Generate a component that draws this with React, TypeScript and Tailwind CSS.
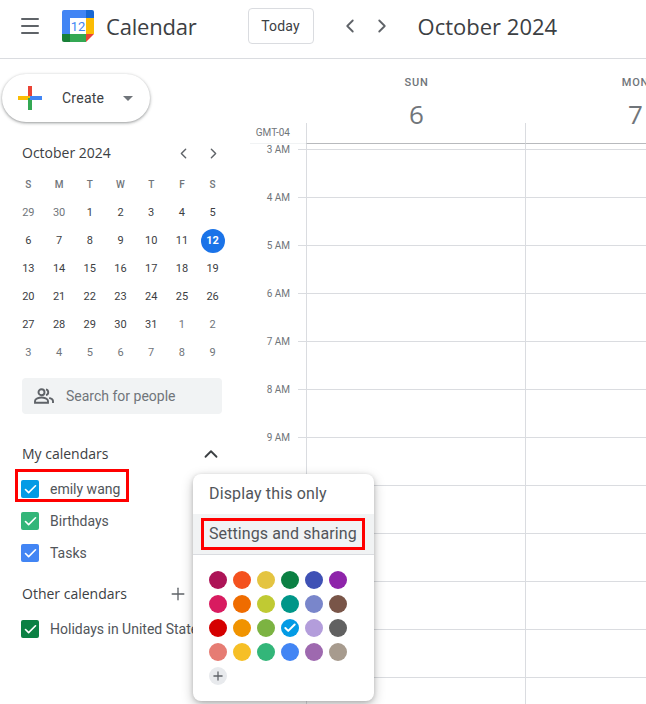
import { ChevronLeft, ChevronRight, ChevronUp, Menu, Plus, Check } from 'lucide-react';

const weekDays = ['S', 'M', 'T', 'W', 'T', 'F', 'S'];

const miniDays = [
  ['29', '30', '1', '2', '3', '4', '5'],
  ['6', '7', '8', '9', '10', '11', '12'],
  ['13', '14', '15', '16', '17', '18', '19'],
  ['20', '21', '22', '23', '24', '25', '26'],
  ['27', '28', '29', '30', '31', '1', '2'],
  ['3', '4', '5', '6', '7', '8', '9'],
];

const hours = ['3 AM', '4 AM', '5 AM', '6 AM', '7 AM', '8 AM', '9 AM', '', '', '', '', ''];

const swatches = [
  '#AD1457', '#F4511E', '#E4C441', '#0B8043', '#3F51B5', '#8E24AA',
  '#D81B60', '#EF6C00', '#C0CA33', '#009688', '#7986CB', '#795548',
  '#D50000', '#F09300', '#7CB342', '#039BE5', '#B39DDB', '#616161',
  '#E67C73', '#F6BF26', '#33B679', '#4285F4', '#9E69AF', '#A79B8E',
];

function Logo() {
  return (
    <svg width="32" height="32" viewBox="0 0 32 32" className="shrink-0">
      <path d="M2 0h22v8H8v16H0V2a2 2 0 0 1 2-2z" fill="#4285f4" />
      <path d="M24 0h6a2 2 0 0 1 2 2v6h-8z" fill="#1967d2" />
      <rect x="24" y="8" width="8" height="16" fill="#fbbc04" />
      <rect x="8" y="24" width="16" height="8" fill="#34a853" />
      <path d="M0 24h8v8H2a2 2 0 0 1-2-2z" fill="#188038" />
      <path d="M24 24h8l-8 8z" fill="#ea4335" />
      <text x="16" y="21" textAnchor="middle" fontSize="13" fill="#4285f4" fontFamily="Roboto, sans-serif">12</text>
    </svg>
  );
}

function ColorPlus() {
  return (
    <svg width="24" height="24" viewBox="0 0 24 24" className="shrink-0">
      <rect x="10" y="0" width="4" height="12" fill="#ea4335" />
      <rect x="0" y="10" width="12" height="4" fill="#fbbc04" />
      <rect x="10" y="12" width="4" height="12" fill="#34a853" />
      <rect x="12" y="10" width="12" height="4" fill="#4285f4" />
    </svg>
  );
}

function PeopleIcon() {
  return (
    <svg width="20" height="16" viewBox="0 0 20 16" fill="none" stroke="#5f6368" strokeWidth="1.9" className="shrink-0">
      <circle cx="7.5" cy="4.2" r="3" />
      <path d="M1 14.8v-1.9c0-2 4-3.4 6.5-3.4s6.5 1.4 6.5 3.4v1.9z" />
      <path d="M12 1.3a3 3 0 0 1 0 5.8" />
      <path d="M15.2 9.8c2 .5 3.8 1.5 3.8 3.1v2" />
    </svg>
  );
}

function CalRow({ color, label }: { color: string; label: string }) {
  return (
    <div className="flex items-center h-8 pl-[21px]">
      <span className="w-[18px] h-[18px] rounded-[2px] flex items-center justify-center shrink-0" style={{ backgroundColor: color }}>
        <Check size={15} strokeWidth={2.6} className="text-white" />
      </span>
      <span className="ml-[11px] text-sm text-[#51555a] whitespace-nowrap">{label}</span>
    </div>
  );
}

export default function App() {
  return (
    <div className="relative w-[646px] h-[704px] overflow-hidden bg-white font-['Roboto',sans-serif] flex flex-col">
      <header className="h-[59px] shrink-0 border-b border-[#dadce0] flex items-center pb-[6px]">
        <Menu size={24} strokeWidth={2} className="ml-[18px] text-[#5f6368]" />
        <div className="ml-[20px]">
          <Logo />
        </div>
        <span className="ml-3 text-[22px] tracking-[-0.2px] text-[#3c4043] font-['Open_Sans',sans-serif]">Calendar</span>
        <button className="ml-[51px] w-[66px] h-9 border border-[#dadce0] rounded text-sm text-[#3c4043] tracking-[0.2px]">Today</button>
        <ChevronLeft size={22} strokeWidth={2} className="ml-[25px] text-[#5f6368]" />
        <ChevronRight size={22} strokeWidth={2} className="ml-[10px] text-[#5f6368]" />
        <span className="ml-[25px] text-[22px] text-[#3c4043] font-['Open_Sans',sans-serif] whitespace-nowrap">October 2024</span>
      </header>

      <div className="flex flex-1 min-h-0">
        <aside className="w-[250px] shrink-0">
          <button className="mt-[15px] ml-[2px] w-[148px] h-12 rounded-full bg-white shadow-[0_1px_3px_1px_rgba(60,64,67,0.2),0_1px_2px_0_rgba(60,64,67,0.3)] flex items-center pl-4">
            <ColorPlus />
            <span className="ml-5 text-sm text-[#3c4043] tracking-[0.25px]">Create</span>
            <span className="ml-[19px] mt-[1px] w-0 h-0 border-x-[5px] border-x-transparent border-t-[5px] border-t-[#70757a]" />
          </button>

          <div className="mt-[19px] ml-[22px] w-[200px] flex items-center h-6">
            <span className="text-sm text-[#3c4043] font-['Open_Sans',sans-serif] flex-1">October 2024</span>
            <ChevronLeft size={17} className="text-[#5f6368] mr-[13px]" />
            <ChevronRight size={17} className="text-[#5f6368]" />
          </div>

          <div className="ml-[13px] mt-[6px] grid grid-cols-7 w-[215px] text-center text-[11px] leading-7">
            {weekDays.map((d, i) => (
              <span key={i} className="h-7 text-[10px] font-medium text-[#70757a]">{d}</span>
            ))}
            {miniDays.flat().map((d, i) => {
              const muted = i < 2 || i > 32;
              const today = i === 13;
              return (
                <span key={i} className="h-7 flex items-center justify-center">
                  <span className={`w-6 h-6 rounded-full flex items-center justify-center ${today ? 'bg-[#1a73e8] text-white font-bold' : muted ? 'text-[#70757a]' : 'text-[#3c4043]'}`}>{d}</span>
                </span>
              );
            })}
          </div>

          <div className="ml-[22px] mt-[11px] w-[200px] h-9 rounded bg-[#f1f3f4] flex items-center pl-[12px]">
            <PeopleIcon />
            <span className="ml-[12px] text-sm text-[#70757a]">Search for people</span>
          </div>

          <div className="mt-[24px] ml-[22px] w-[199px] flex items-center justify-between h-8">
            <span className="text-sm text-[#3c4043] font-['Open_Sans',sans-serif]">My calendars</span>
            <ChevronUp size={22} strokeWidth={2} className="text-[#3c4043] -mr-[1px]" />
          </div>
          <div className="mt-[3px]">
            <CalRow color="#039be5" label="emily wang" />
            <CalRow color="#33b679" label="Birthdays" />
            <CalRow color="#4285f4" label="Tasks" />
          </div>
          <div className="mt-[9px] ml-[22px] w-[166px] flex items-center justify-between h-8">
            <span className="text-sm text-[#3c4043] font-['Open_Sans',sans-serif]">Other calendars</span>
            <Plus size={20} strokeWidth={1.6} className="text-[#5f6368]" />
          </div>
          <div className="mt-[3px]">
            <CalRow color="#0b8043" label="Holidays in United States" />
          </div>
        </aside>

        <main className="flex-1 min-w-0 overflow-hidden">
          <div className="flex h-[64px]">
            <div className="w-[56px] shrink-0" />
            <div className="w-[219px] shrink-0 flex flex-col items-center pt-[18px] pl-[2px]">
              <span className="text-[11px] leading-3 font-medium tracking-[0.8px] text-[#70757a]">SUN</span>
              <span className="text-[26px] leading-8 mt-[9px] text-[#70757a] font-['Open_Sans',sans-serif]">6</span>
            </div>
            <div className="w-[219px] shrink-0 flex flex-col items-center pt-[18px] pl-[2px]">
              <span className="text-[11px] leading-3 font-medium tracking-[0.8px] text-[#70757a]">MON</span>
              <span className="text-[26px] leading-8 mt-[9px] text-[#70757a] font-['Open_Sans',sans-serif]">7</span>
            </div>
          </div>
          <div className="flex h-[21px]">
            <div className="w-[56px] shrink-0 border-b border-[#f1f3f4] text-[10px] leading-3 text-[#70757a] text-right pr-[16px] pt-[4px] whitespace-nowrap">GMT-04</div>
            <div className="w-[219px] shrink-0 border-l border-b border-l-[#dadce0] border-b-[#b8babd]" />
            <div className="w-[219px] shrink-0 border-l border-b border-l-[#dadce0] border-b-[#b8babd]" />
          </div>
          <div className="flex h-[5px]">
            <div className="w-[56px] shrink-0" />
            <div className="w-[219px] shrink-0 border-l border-[#dadce0]" />
            <div className="w-[219px] shrink-0 border-l border-[#dadce0]" />
          </div>
          {hours.map((h, i) => (
            <div key={i} className="flex h-[48px]">
              <div className="w-[48px] shrink-0 text-[10px] leading-3 text-[#70757a] text-right pr-[8px] -mt-[5px] whitespace-nowrap">{h}</div>
              <div className="w-[8px] shrink-0 border-t border-[#dadce0]" />
              <div className="w-[219px] shrink-0 border-l border-t border-[#dadce0]" />
              <div className="w-[219px] shrink-0 border-l border-t border-[#dadce0]" />
            </div>
          ))}
        </main>
      </div>

      <div className="absolute left-[15px] top-[469px] w-[114px] h-[33px] border-[3px] border-[#ff0000]" />

      <div className="absolute left-[193px] top-[474px] w-[181px] h-[227px] bg-white rounded-lg shadow-[0_4px_12px_rgba(0,0,0,0.25),0_1px_4px_rgba(0,0,0,0.15)] text-[#51555a]">
        <div className="h-[40px] pl-4 flex items-center text-base tracking-[0.15px]">Display this only</div>
        <div className="relative h-[41px] bg-[#f1f3f4] border-b border-[#dadce0] pl-4 flex items-center text-base tracking-[0.1px] whitespace-nowrap">
          Settings and sharing
          <span className="absolute left-[8px] top-[4px] w-[164px] h-[32px] border-[3px] border-[#ff0000]" />
        </div>
        <div className="pl-[16px] pt-[16px] grid grid-cols-6 w-[154px] gap-[6px]">
          {swatches.map((c) => (
            <span key={c} className="w-[18px] h-[18px] rounded-full flex items-center justify-center" style={{ backgroundColor: c }}>
              {c === '#039BE5' && <Check size={14} strokeWidth={3.4} className="text-white" />}
            </span>
          ))}
          <span className="w-[18px] h-[18px] rounded-full bg-[#e8eaed] flex items-center justify-center">
            <Plus size={14} strokeWidth={2.2} className="text-[#5f6368]" />
          </span>
        </div>
      </div>
    </div>
  );
}
